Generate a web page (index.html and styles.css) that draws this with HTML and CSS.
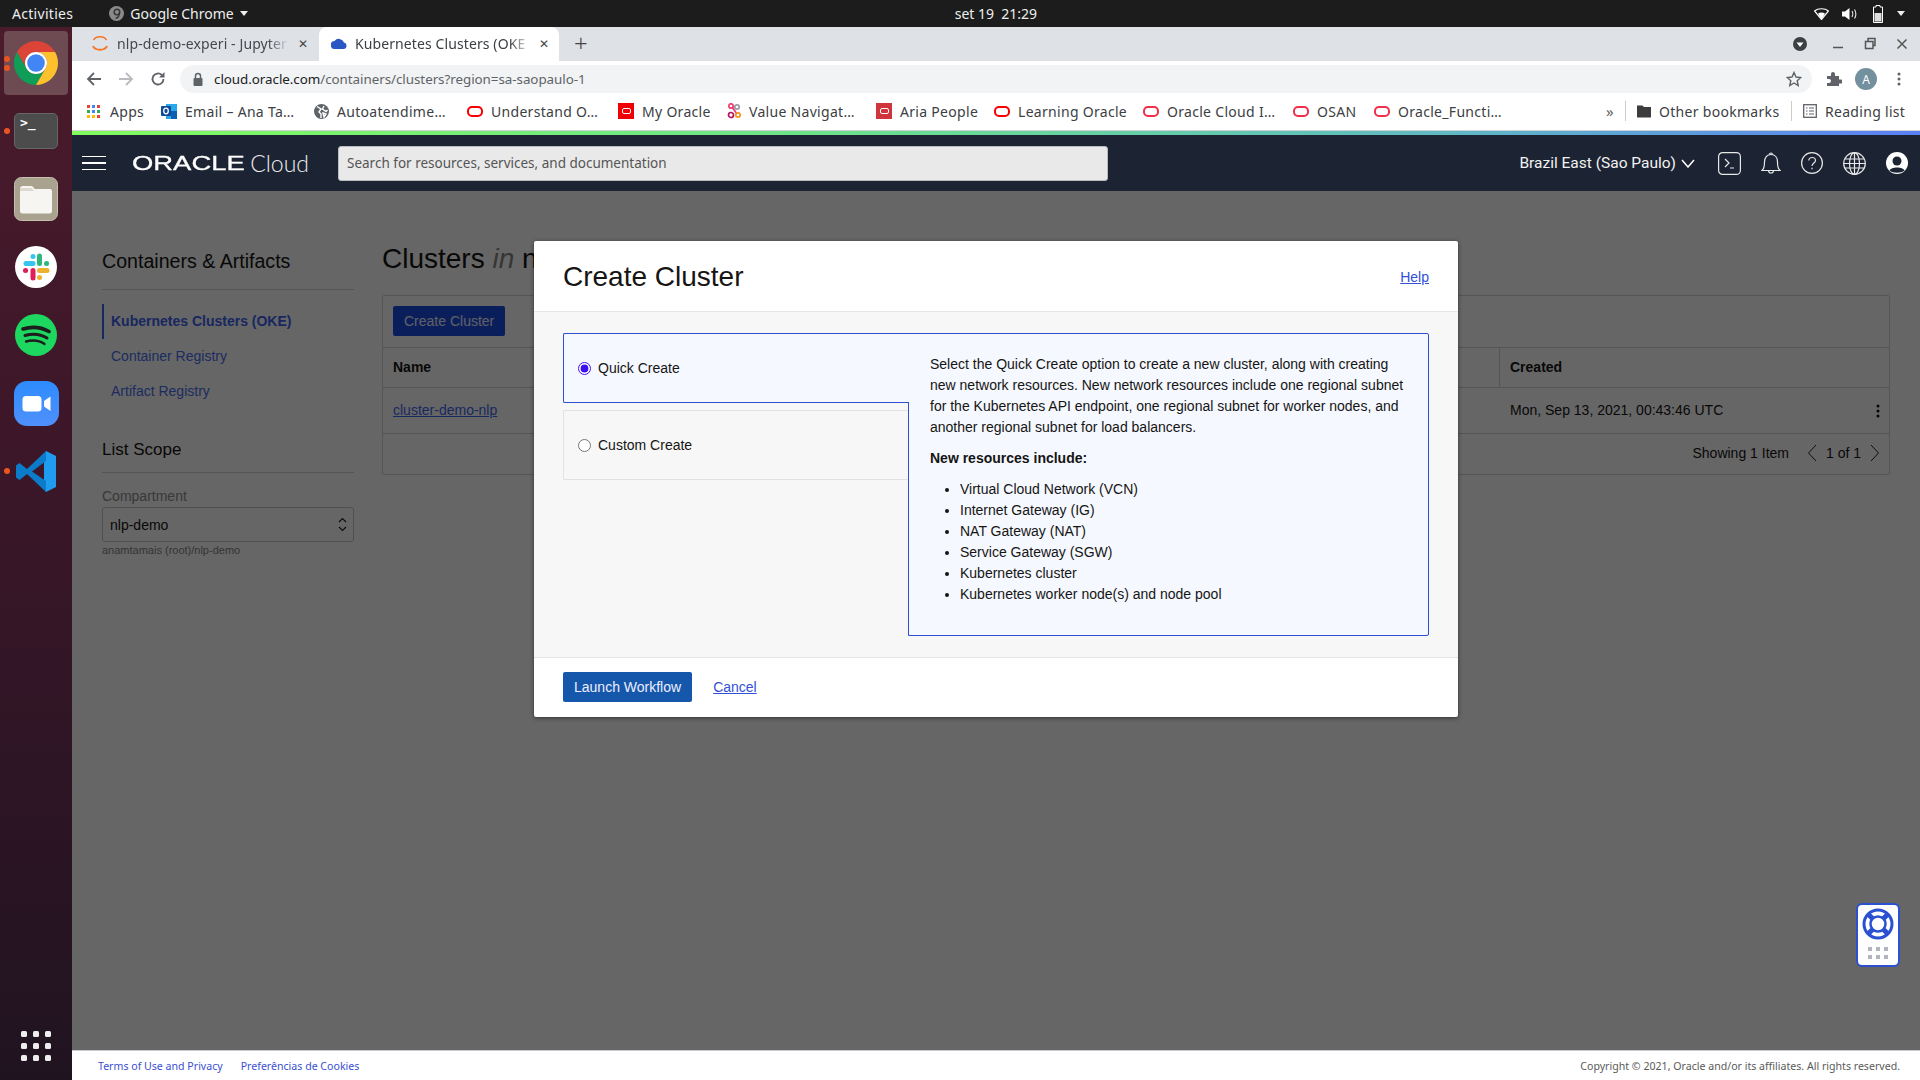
FILE: index.html
```html
<!DOCTYPE html>
<html lang="en">
<head>
<meta charset="utf-8">
<title>Kubernetes Clusters (OKE)</title>
<link rel="stylesheet" href="styles.css">
</head>
<body>
<header class="topbar">
  <span class="activities">Activities</span>
  <span class="appmenu">
    <svg width="15" height="15" viewBox="0 0 16 16"><circle cx="8" cy="8" r="8" fill="#8a8a8a"/><circle cx="8.5" cy="6.5" r="3" fill="none" stroke="#333" stroke-width="1.5"/><path d="M11 7c0 4-2 6-4 6" fill="none" stroke="#333" stroke-width="1.5"/></svg>
    <span>Google Chrome</span>
    <i class="caret"></i>
  </span>
  <span class="clock">set 19&nbsp; 21:29</span>
  <span class="tray">
    <svg width="15" height="12" viewBox="0 0 15 12"><path d="M.5 3C4 0 11 0 14.500 3L7.500 11.500Z" fill="none" stroke="#fff" stroke-width="1.200"/><path d="M4 5.500C6 4 9 4 11 5.500L7.500 11.500Z" fill="#fff"/></svg>
    <svg width="15" height="14" viewBox="0 0 15 14"><path d="M0 4.500H3L7.500 1V13L3 9.500H0Z" fill="#fff"/><path d="M10 4C11 5.500 11 8.500 10 10M12.500 2.500C14.300 5 14.300 9 12.500 11.500" fill="none" stroke="#ddd" stroke-width="1.200"/></svg>
    <svg class="battery" width="10" height="18" viewBox="0 0 10 18"><path d="M3 .5H7V2H9.500V17.500H.5V2H3Z" fill="none" stroke="#fff"/><rect x="1.500" y="8" width="7" height="8.500" fill="#ddd"/></svg>
    <i class="caret tray-caret"></i>
  </span>
</header>

<div class="desktop">
  <nav class="dock">
    <div class="dock-item active">
      <i class="run-dot dot-a"></i><i class="run-dot dot-b"></i>
      <svg width="44" height="44" viewBox="2 2 44 44"><path d="M4.950 13A22 22 0 0 1 43.050 13H24A11 11 0 0 0 14.470 29.500Z" fill="#db4437"/><path d="M24 46A22 22 0 0 1 4.950 13L14.470 29.500A11 11 0 0 0 33.530 29.500Z" fill="#0f9d58"/><path d="M43.050 13A22 22 0 0 1 24 46L33.530 29.500A11 11 0 0 0 24 13Z" fill="#fdc12d"/><circle cx="24" cy="24" r="11" fill="#fff"/><circle cx="24" cy="24" r="8.800" fill="#4285f4"/></svg>
    </div>
    <div class="dock-item">
      <i class="run-dot"></i>
      <div class="term-icon"><span>&gt;_</span></div>
    </div>
    <div class="dock-item">
      <svg width="44" height="44" viewBox="0 0 44 44"><rect x=".5" y=".5" width="43" height="43" rx="7" fill="#a8a28e" stroke="#c4bfae"/><path d="M6 12a3 3 0 0 1 3-3H17a3 3 0 0 1 3 2.500L21 12H36a2 2 0 0 1 2 2V34a2.500 2.500 0 0 1-2.500 2.500H8.500A2.500 2.500 0 0 1 6 34Z" fill="#f6f5f2"/><path d="M6 14H20L17.500 11H6Z" fill="#dcd9d0"/></svg>
    </div>
    <div class="dock-item">
      <svg width="42" height="42" viewBox="0 0 42 42"><circle cx="21" cy="21" r="21" fill="#fff"/><g fill="none" stroke-width="5" stroke-linecap="round"><path d="M11 17.500H18" stroke="#36c5f0"/><path d="M18 10.500V10.600" stroke="#36c5f0"/><path d="M24.500 10V17.500" stroke="#2eb67d"/><path d="M31.500 17.500H31.600" stroke="#2eb67d"/><path d="M24.500 24.500H32" stroke="#ecb22e"/><path d="M24.500 31.500H24.600" stroke="#ecb22e"/><path d="M18 24.500V32" stroke="#e01e5a"/><path d="M10.500 24.500H10.600" stroke="#e01e5a"/></g></svg>
    </div>
    <div class="dock-item">
      <svg width="42" height="42" viewBox="0 0 42 42"><circle cx="21" cy="21" r="21" fill="#1ed760"/><g fill="none" stroke="#1d1d1d" stroke-linecap="round"><path d="M8 15C16 12.500 26 13 34 17.500" stroke-width="3.600"/><path d="M10 21.500C17 19.500 25.500 20 32 24" stroke-width="3"/><path d="M11 27.500C17 26 24.500 26.500 29.500 30" stroke-width="2.400"/></g></svg>
    </div>
    <div class="dock-item">
      <svg width="45" height="45" viewBox="0 0 45 45"><defs><linearGradient id="zg" x1="0" y1="0" x2="0" y2="1"><stop offset="0" stop-color="#2d8cff"/><stop offset="1" stop-color="#4f90fb"/></linearGradient></defs><rect width="45" height="45" rx="13" fill="url(#zg)"/><rect x="8.500" y="15" width="19" height="15.500" rx="3.500" fill="#fff"/><path d="M30 20L36.500 15.500V30L30 25.500Z" fill="#fff"/></svg>
    </div>
    <div class="dock-item">
      <i class="run-dot"></i>
      <svg width="42" height="43" viewBox="0 0 42 43"><path d="M31 1 41 6V37L31 42 29 30V12Z" fill="#1f9cf0"/><path d="M31 1 12 19 4.500 13 1 15.500V27.500L4.500 30 12 24 31 42V31L17 21.500 31 11Z" fill="#0a7cc9"/></svg>
    </div>
    <div class="dock-apps">
      <svg width="30" height="30" viewBox="0 0 30 30" fill="#eee"><rect x="0" y="0" width="6" height="6" rx="1.500"/><rect x="12" y="0" width="6" height="6" rx="1.500"/><rect x="24" y="0" width="6" height="6" rx="1.500"/><rect x="0" y="12" width="6" height="6" rx="1.500"/><rect x="12" y="12" width="6" height="6" rx="1.500"/><rect x="24" y="12" width="6" height="6" rx="1.500"/><rect x="0" y="24" width="6" height="6" rx="1.500"/><rect x="12" y="24" width="6" height="6" rx="1.500"/><rect x="24" y="24" width="6" height="6" rx="1.500"/></svg>
    </div>
  </nav>

  <div class="browser">
    <div class="tabstrip">
      <div class="tab">
        <svg width="16" height="18" viewBox="0 0 16 18"><path d="M1.500 6C3.500 1.500 12.500 1.500 14.500 6" fill="none" stroke="#f37726" stroke-width="1.500"/><path d="M1 12C3 17 13 17 15 12" fill="none" stroke="#f37726" stroke-width="2"/></svg>
        <span class="tab-title">nlp-demo-experi - Jupyter</span>
        <span class="tab-x">✕</span>
      </div>
      <div class="tab tab-active">
        <svg width="16" height="12" viewBox="0 0 16 12"><path d="M4 12a4 4 0 0 1-.5-8A5.500 5.500 0 0 1 13 5.500 3.300 3.300 0 0 1 12.500 12Z" fill="#2b57c4"/></svg>
        <span class="tab-title">Kubernetes Clusters (OKE</span>
        <span class="tab-x">✕</span>
      </div>
      <span class="newtab">+</span>
      <div class="winctl">
        <svg class="profile-dot" width="14" height="14" viewBox="0 0 14 14"><circle cx="7" cy="7" r="7" fill="#3c4043"/><path d="M3.500 5.500H10.500L7 10Z" fill="#fff"/></svg>
        <svg width="14" height="14" viewBox="0 0 14 14"><path d="M2 10.500H12" stroke="#555" stroke-width="1.500"/></svg>
        <svg width="14" height="14" viewBox="0 0 14 14"><path d="M5 1.500H12V8.500H10V11.500H2.500V4.500H5Z M5 4.500H10V8.500" fill="none" stroke="#555" stroke-width="1.500"/></svg>
        <svg width="14" height="14" viewBox="0 0 14 14"><path d="M2.500 2.500 11.500 11.500M11.500 2.500 2.500 11.500" stroke="#555" stroke-width="1.500"/></svg>
      </div>
    </div>

    <div class="toolbar">
      <svg width="16" height="16" viewBox="0 0 16 16"><path d="M15 8H2M8 2 2 8l6 6" fill="none" stroke="#5f6368" stroke-width="1.800"/></svg>
      <svg width="16" height="16" viewBox="0 0 16 16"><path d="M1 8H14M8 2l6 6-6 6" fill="none" stroke="#b8bbbf" stroke-width="1.800"/></svg>
      <svg width="16" height="16" viewBox="0 0 16 16"><path d="M13.500 8A5.500 5.500 0 1 1 11.800 4" fill="none" stroke="#5f6368" stroke-width="1.800"/><path d="M14.500 1V6.500H9Z" fill="#5f6368"/></svg>
      <div class="omnibox">
        <svg width="12" height="14" viewBox="0 0 12 14"><rect x="1.500" y="6" width="9" height="8" rx="1" fill="#5f6368"/><path d="M3.500 6V4a2.500 2.500 0 0 1 5 0V6" fill="none" stroke="#5f6368" stroke-width="1.500"/></svg>
        <span class="url"><b class="url-host">cloud.oracle.com</b>/containers/clusters?region=sa-saopaulo-1</span>
        <svg class="star" width="16" height="16" viewBox="0 0 16 16"><path d="M8 1.500 10 6l4.800.500-3.600 3.200 1 4.800L8 12l-4.200 2.500 1-4.800L1.200 6.500 6 6Z" fill="none" stroke="#5f6368" stroke-width="1.400"/></svg>
      </div>
      <svg class="puzzle" width="16" height="16" viewBox="0 0 16 16"><path d="M1 5H5V3a2 2 0 0 1 4 0V5H13V8.500H15a2 2 0 0 1 0 4H13V15H1V12H3a2 2 0 0 0 0-4H1Z" fill="#5f6368"/></svg>
      <span class="avatar">A</span>
      <svg class="kebab" width="16" height="16" viewBox="0 0 16 16" fill="#5f6368"><circle cx="8" cy="3" r="1.500"/><circle cx="8" cy="8" r="1.500"/><circle cx="8" cy="13" r="1.500"/></svg>
    </div>

    <div class="bookmarks">
      <span class="bm w-apps">
        <svg width="13" height="13" viewBox="0 0 13 13"><rect width="3" height="3" fill="#ea4335"/><rect x="5" width="3" height="3" fill="#4285f4"/><rect x="10" width="3" height="3" fill="#ea4335"/><rect y="5" width="3" height="3" fill="#34a853"/><rect x="5" y="5" width="3" height="3" fill="#4285f4"/><rect x="10" y="5" width="3" height="3" fill="#34a853"/><rect y="10" width="3" height="3" fill="#fbbc05"/><rect x="5" y="10" width="3" height="3" fill="#fbbc05"/><rect x="10" y="10" width="3" height="3" fill="#ea4335"/></svg>
        <span>Apps</span>
      </span>
      <span class="bm w-153">
        <svg width="16" height="16" viewBox="0 0 16 16"><rect x="5" y="1" width="11" height="15" fill="#28a8ea"/><rect x="10" y="8" width="6" height="8" fill="#0a5fb0"/><rect y="3" width="10" height="10" rx="1" fill="#0f4a99"/><ellipse cx="5" cy="8" rx="2.300" ry="2.800" fill="none" stroke="#fff" stroke-width="1.300"/></svg>
        <span>Email – Ana Ta…</span>
      </span>
      <span class="bm w-153">
        <svg width="15" height="15" viewBox="0 0 15 15"><circle cx="7.500" cy="7.500" r="7.500" fill="#5f6368"/><path d="M3 2.500 7 5 5 8l2 2V14M10 2 8.500 5 12 7.500 13.500 6M9 9l3 1-2 3Z" fill="none" stroke="#fff" stroke-width="1.400"/></svg>
        <span>Autoatendime…</span>
      </span>
      <span class="bm w-151"><i class="oracle-oval"></i><span>Understand O…</span></span>
      <span class="bm w-myo"><i class="oracle-box"><i></i></i><span>My Oracle</span></span>
      <span class="bm w-149">
        <svg width="14" height="16" viewBox="0 0 14 16" fill="none" stroke-width="1.700"><path d="M5 4 10 11" stroke="#e0447c"/><circle cx="4" cy="3" r="2.200" stroke="#ef3d6e"/><circle cx="10" cy="4" r="2.200" stroke="#9a9aa5"/><circle cx="4" cy="12" r="2.500" stroke="#b5135f"/><circle cx="11" cy="12" r="2.200" stroke="#f7941d"/></svg>
        <span>Value Navigat…</span>
      </span>
      <span class="bm w-aria"><i class="oracle-box aria"><i></i></i><span>Aria People</span></span>
      <span class="bm w-149"><i class="oracle-oval"></i><span>Learning Oracle</span></span>
      <span class="bm w-150"><i class="oracle-oval soft"></i><span>Oracle Cloud I…</span></span>
      <span class="bm w-osan"><i class="oracle-oval soft"></i><span>OSAN</span></span>
      <span class="bm w-153"><i class="oracle-oval soft"></i><span>Oracle_Functi…</span></span>
      <span class="bm-more">»</span>
      <i class="bm-sep"></i>
      <span class="bm w-other">
        <svg width="14" height="14" viewBox="0 0 14 14"><path d="M0 1.500H5.500L7 3H14V13.500H0Z" fill="#3c3c3c"/></svg>
        <span>Other bookmarks</span>
      </span>
      <i class="bm-sep sep-b"></i>
      <span class="bm w-read">
        <svg width="14" height="14" viewBox="0 0 14 14"><rect x=".7" y=".7" width="12.600" height="12.600" fill="none" stroke="#5f6368" stroke-width="1.300"/><path d="M3 4H4.500M6 4H11M3 7H4.500M6 7H11M3 10H4.500M6 10H11" stroke="#5f6368" stroke-width="1.200"/></svg>
        <span>Reading list</span>
      </span>
    </div>
    <div class="rainbow"></div>

    <div class="oci-header">
      <span class="hamburger"><i></i><i></i><i></i></span>
      <span class="logo"><span class="logo-oracle">ORACLE</span><span class="logo-cloud">Cloud</span></span>
      <div class="search">Search for resources, services, and documentation</div>
      <div class="oci-right">
        <span class="region">Brazil East (Sao Paulo)</span>
        <svg class="chev" width="14" height="9" viewBox="0 0 14 9"><path d="M1 1 7 8l6-7" fill="none" stroke="#fff" stroke-width="1.500"/></svg>
        <svg class="cs-icon" width="23" height="23" viewBox="0 0 23 23" fill="none" stroke="#e8e8e8" stroke-width="1.200"><rect x=".6" y=".6" width="21.800" height="21.800" rx="4"/><path d="M7 7 11 11 7 15M12 16H16"/></svg>
        <svg width="20" height="24" viewBox="0 0 20 24" fill="none" stroke="#e8e8e8" stroke-width="1.200"><path d="M1 19.500C3.500 17.500 3.500 14 3.500 11 3.500 6.500 6 3.500 10 3.500S16.500 6.500 16.500 11C16.500 14 16.500 17.500 19 19.500Z"/><path d="M8.500 3.500a1.500 1.500 0 0 1 3 0M7.500 19.500a2.500 2.500 0 0 0 5 0"/></svg>
        <svg width="22" height="22" viewBox="0 0 22 22" fill="none" stroke="#e8e8e8" stroke-width="1.200"><circle cx="11" cy="11" r="10.400"/><path d="M7.800 8.500C8 4.500 14.500 4.500 14.500 8.500 14.500 11 11 11 11 14M11 15.800V17.300"/></svg>
        <svg width="23" height="23" viewBox="0 0 23 23" fill="none" stroke="#e8e8e8" stroke-width="1.200"><circle cx="11.500" cy="11.500" r="10.800"/><ellipse cx="11.500" cy="11.500" rx="5" ry="10.800"/><path d="M11.500 .7V22.300M1.800 7H21.200M1.800 16H21.200M.7 11.500H22.300"/></svg>
        <svg width="22" height="22" viewBox="0 0 22 22"><circle cx="11" cy="11" r="11" fill="#fff"/><circle cx="11" cy="9" r="4.500" fill="#1c2333"/><path d="M3.500 18.500C5 14.500 17 14.500 18.500 18.500 15 21.500 7 21.500 3.500 18.500Z" fill="#1c2333"/></svg>
      </div>
    </div>

    <main class="content">
      <div class="page">
        <aside class="sidebar">
          <h2 class="side-title first">Containers &amp; Artifacts</h2>
          <ul class="side-nav">
            <li class="current">Kubernetes Clusters (OKE)</li>
            <li>Container Registry</li>
            <li>Artifact Registry</li>
          </ul>
          <h2 class="side-title scope">List Scope</h2>
          <div class="field-label">Compartment</div>
          <div class="select">
            <span>nlp-demo</span>
            <svg width="9" height="15" viewBox="0 0 9 15" fill="none" stroke="#222" stroke-width="1.200"><path d="M1 5 4.500 1.500 8 5M1 10 4.500 13.500 8 10"/></svg>
          </div>
          <div class="field-hint">anamtamais (root)/nlp-demo</div>
        </aside>
        <section class="listing">
          <h1 class="list-title">Clusters <em>in</em> n</h1>
          <div class="panel">
            <div class="panel-tools"><span class="btn-dim">Create Cluster</span></div>
            <div class="row row-head"><span>Name</span><span class="col-created">Created</span></div>
            <div class="row row-body"><a class="cluster-link">cluster-demo-nlp</a><span class="col-created plain">Mon, Sep 13, 2021, 00:43:46 UTC<svg class="row-menu" width="4" height="14" viewBox="0 0 4 14" fill="#111"><circle cx="2" cy="2" r="1.500"/><circle cx="2" cy="7" r="1.500"/><circle cx="2" cy="12" r="1.500"/></svg></span></div>
            <div class="row-foot">
              <span>Showing 1 Item</span>
              <svg width="10" height="18" viewBox="0 0 10 18" fill="none" stroke="#222"><path d="M9 1 1.500 9 9 17"/></svg>
              <span>1 of 1</span>
              <svg width="10" height="18" viewBox="0 0 10 18" fill="none" stroke="#222"><path d="M1 1 8.500 9 1 17"/></svg>
            </div>
          </div>
        </section>
      </div>

      <div class="backdrop">
        <div class="modal">
          <div class="modal-head">
            <h2 class="modal-title">Create Cluster</h2>
            <a class="link">Help</a>
          </div>
          <div class="modal-body">
            <div class="options">
              <label class="option selected"><input type="radio" name="mode" checked><span>Quick Create</span></label>
              <label class="option"><input type="radio" name="mode"><span>Custom Create</span></label>
            </div>
            <div class="details">
              <p>Select the Quick Create option to create a new cluster, along with creating new network resources. New network resources include one regional subnet for the Kubernetes API endpoint, one regional subnet for worker nodes, and another regional subnet for load balancers.</p>
              <p class="strong">New resources include:</p>
              <ul>
                <li>Virtual Cloud Network (VCN)</li>
                <li>Internet Gateway (IG)</li>
                <li>NAT Gateway (NAT)</li>
                <li>Service Gateway (SGW)</li>
                <li>Kubernetes cluster</li>
                <li>Kubernetes worker node(s) and node pool</li>
              </ul>
            </div>
          </div>
          <div class="modal-foot">
            <span class="btn-primary">Launch Workflow</span>
            <a class="link">Cancel</a>
          </div>
        </div>
      </div>

      <div class="help-widget">
        <svg width="32" height="32" viewBox="0 0 32 32"><circle cx="16" cy="16" r="14" fill="#fff" stroke="#2b50d2" stroke-width="3"/><path d="M6.500 6.500 25.500 25.500M25.500 6.500 6.500 25.500" stroke="#2b50d2" stroke-width="5"/><circle cx="16" cy="16" r="7.500" fill="#fff" stroke="#2b50d2" stroke-width="2.500"/></svg>
        <svg width="20" height="13" viewBox="0 0 20 13" fill="#b1b4be"><rect width="4" height="4"/><rect x="8" width="4" height="4"/><rect x="16" width="4" height="4"/><rect y="8" width="4" height="4"/><rect x="8" y="8" width="4" height="4"/><rect x="16" y="8" width="4" height="4"/></svg>
      </div>
    </main>

    <footer class="oci-footer">
      <a>Terms of Use and Privacy</a>
      <a>Preferências de Cookies</a>
      <span class="copyright">Copyright © 2021, Oracle and/or its affiliates. All rights reserved.</span>
    </footer>
  </div>
</div>
</body>
</html>
```
FILE: styles.css
```css
* { box-sizing: border-box; }
html, body { margin: 0; height: 100%; overflow: hidden; }
body { display: flex; flex-direction: column; height: 1080px; font-family: "Noto Sans", sans-serif; background: #1c1c1c; }
i { font-style: normal; display: block; }
svg { flex: none; display: block; }

/* Ubuntu top bar */
.topbar { height: 27px; flex: none; background: #1c1c1c; color: #eee; display: flex; align-items: center; font-size: 14px; position: relative; }
.activities { margin-left: 12px; letter-spacing: .3px; }
.appmenu { display: flex; align-items: center; gap: 6px; margin-left: 36px; }
.caret { width: 0; height: 0; border: 4.500px solid transparent; border-top: 5px solid #eee; border-bottom: 0; }
.clock { margin-left: 707px; font-size: 14px; }
.tray { margin-left: auto; margin-right: 15px; display: flex; align-items: center; gap: 13px; }
.battery { margin-left: 3px; }
.tray-caret { margin-left: 1px; }

.desktop { flex: 1; display: flex; min-height: 0; }

/* Dock */
.dock { width: 72px; flex: none; display: flex; flex-direction: column; padding-top: 2px; background: linear-gradient(#4a1b2b 0%, #3c1729 40%, #201320 100%); }
.dock-item { height: 68px; display: flex; align-items: center; justify-content: center; position: relative; }
.dock-item.active::before { content: ""; position: absolute; left: 4px; right: 4px; top: 2px; bottom: 2px; border-radius: 4px; background: #6e4a52; }
.dock-item > svg, .dock-item > div { position: relative; }
.run-dot { position: absolute; left: 4px; top: 31px; width: 6px; height: 6px; border-radius: 50%; background: #e95420; }
.dot-a { top: 27px; }
.dot-b { top: 36px; }
.term-icon { width: 44px; height: 36px; border-radius: 5px; background: #4c4c4c; border: 1px solid #666; color: #fff; font: 700 13px "DejaVu Sans Mono", monospace; padding: 1px 0 0 5px; }
.dock-apps { margin-top: auto; height: 68px; display: flex; align-items: flex-start; justify-content: center; padding-top: 19px; }

/* Chrome */
.browser { flex: 1; min-width: 0; display: flex; flex-direction: column; background: #fff; }
.tabstrip { height: 34px; flex: none; background: #dee1e6; display: flex; align-items: stretch; font-size: 14px; color: #45484d; }
.tab { width: 247px; display: flex; align-items: center; padding: 0 0 2px 20px; gap: 9px; }
.tab-active { width: 240px; padding-left: 12px; gap: 8px; background: #fff; border-radius: 8px 8px 0 0; color: #3c4043; }
.tab-title { width: 172px; white-space: nowrap; letter-spacing: .1px; -webkit-mask-image: linear-gradient(90deg, #000 88%, transparent); mask-image: linear-gradient(90deg, #000 88%, transparent); }
.tab-active .tab-title { width: 176px; }
.tab-x { font-size: 12px; color: #444; }
.newtab { font-size: 24px; font-weight: 300; margin-left: 15px; line-height: 31px; color: #444; }
.winctl { margin-left: auto; margin-right: 11px; display: flex; align-items: center; gap: 18px; }
.profile-dot { margin-right: 6px; }

.toolbar { height: 33px; flex: none; display: flex; align-items: center; gap: 16px; padding: 3px 13px 0 14px; }
.omnibox { flex: 1; height: 28px; margin-left: -2px; background: #f1f3f4; border-radius: 14px; display: flex; align-items: center; padding: 0 10px 0 12px; gap: 10px; }
.url { font-size: 13.400px; line-height: 26px; padding-bottom: 1px; color: #5f6368; letter-spacing: -.05px; }
.url-host { font-weight: 400; color: #202124; }
.star { margin-left: auto; }
.puzzle { margin-left: -2px; }
.avatar { width: 22px; height: 22px; margin: 0 -2px 0 -3px; border-radius: 50%; background: #73909f; color: #fff; font-size: 12px; display: flex; align-items: center; justify-content: center; }

.bookmarks { height: 37px; flex: none; display: flex; align-items: center; padding: 0 0 2px 15px; border-bottom: 1px solid #d0d2d6; font-size: 14px; letter-spacing: .3px; color: #3c4043; }
.bm { display: flex; align-items: center; gap: 8px; white-space: nowrap; flex: none; }
.w-apps { width: 74px; gap: 10px; }
.w-153 { width: 153px; }
.w-151 { width: 151px; }
.w-150 { width: 150px; }
.w-149 { width: 149px; }
.w-myo { width: 109px; }
.w-aria { width: 118px; }
.w-osan { width: 81px; }
.oracle-oval { width: 16px; height: 11px; border: 2.200px solid #f80000; border-radius: 5px; flex: none; }
.oracle-oval.soft { border-color: #f0304a; }
.oracle-box { width: 16px; height: 16px; background: #f00000; display: flex; align-items: center; justify-content: center; flex: none; }
.oracle-box.aria { background: #d0353c; }
.oracle-box i { width: 9px; height: 6px; border: 1.500px solid #fff; border-radius: 2px; }
.bm-more { margin-left: 79px; font-size: 15px; width: 19px; flex: none; color: #5f6368; }
.bm-sep { width: 1px; height: 20px; background: #ccc; margin-right: 11px; flex: none; }
.sep-b { margin-left: 11px; }
.w-other { width: 143px; }
.w-read { width: 110px; }

.rainbow { height: 4px; flex: none; background: linear-gradient(90deg, #82fb5f 0%, #6de38a 40%, #5fb8c4 75%, #5b7ff5 100%); }

/* OCI header */
.oci-header { height: 56px; flex: none; background: #1c2333; color: #fff; display: flex; align-items: center; padding: 0 12px 0 10px; }
.hamburger { width: 24px; display: flex; flex-direction: column; gap: 5px; flex: none; }
.hamburger i { height: 1.500px; background: #fff; }
.logo { width: 177px; margin-left: 26px; flex: none; display: flex; align-items: center; }
.logo-oracle { width: 123px; font: 400 20px "Liberation Sans", sans-serif; -webkit-text-stroke: .3px #fff; transform: scaleX(1.370); transform-origin: left center; white-space: nowrap; }
.logo-cloud { font: 300 23px Lato, sans-serif; color: #eee; }
.search { width: 770px; height: 35px; margin-left: 29px; flex: none; background: #e9e9e9; border: 1px solid #b9bcc2; border-radius: 3px; color: #555; font-size: 13.500px; line-height: 32px; padding-left: 8px; }
.oci-right { margin-left: auto; display: flex; align-items: center; gap: 20px; }
.region { font: 15.500px Roboto, sans-serif; color: #f2f2f2; margin-right: -15px; }
.chev { margin-right: 3px; }

/* Content */
.content { flex: 1; min-height: 0; position: relative; background: #fff; overflow: hidden; }
.page { display: flex; gap: 28px; padding: 51px 30px 0; font-family: "Liberation Sans", sans-serif; color: #161513; font-size: 14px; }
.sidebar { width: 252px; flex: none; padding-top: 5px; }
.side-title { margin: 0; font-weight: 400; border-bottom: 1px solid #d4d4d4; }
.first { font-size: 19.600px; line-height: 28px; padding-bottom: 14px; }
.scope { font-size: 17px; line-height: 24px; padding-bottom: 10px; margin-top: 29px; }
.side-nav { list-style: none; margin: 14px 0 0; padding: 0; color: #4a6ff0; }
.side-nav li { height: 35px; line-height: 35px; padding-left: 9px; }
.side-nav .current { font-weight: 700; color: #3d62f0; border-left: 2px solid #3d62f0; padding-left: 7px; }
.field-label { margin-top: 14px; line-height: 18px; color: #8e8e8e; }
.select { height: 35px; margin-top: 2px; border: 1px solid #c8c8c8; border-radius: 3px; display: flex; align-items: center; justify-content: space-between; padding: 0 6px 0 7px; }
.field-hint { font-size: 11px; line-height: 14px; margin-top: 1px; color: #858585; }
.listing { flex: 1; min-width: 0; }
.list-title { margin: 0; font-size: 28px; line-height: 34px; font-weight: 400; white-space: nowrap; }
.list-title em { color: #888; }
.panel { margin-top: 19px; border: 1px solid #d4d4d4; border-radius: 2px; }
.panel-tools { height: 51px; padding: 10px; }
.btn-dim { display: inline-block; height: 30px; line-height: 30px; padding: 0 11px; background: #1c4de6; color: #eef; border-radius: 2px; }
.row { display: flex; justify-content: space-between; align-items: stretch; border-top: 1px solid #d4d4d4; padding-left: 10px; }
.row-head { height: 40px; line-height: 39px; font-weight: 700; }
.row-body { height: 46px; line-height: 45px; }
.cluster-link { color: #3f68f0; text-decoration: underline; }
.col-created { width: 390px; padding-left: 10px; border-left: 1px solid #d4d4d4; position: relative; }
.col-created.plain { border-left: 0; padding-left: 11px; }
.row-menu { position: absolute; right: 9px; top: 16px; }
.row-foot { height: 41px; border-top: 1px solid #d4d4d4; display: flex; align-items: center; justify-content: flex-end; gap: 9px; padding: 0 9px 2px 0; font-size: 14px; }
.row-foot span:first-child { margin-right: 9px; }

.backdrop { position: absolute; inset: 0; background: rgba(0,0,0,.6); display: flex; justify-content: center; align-items: flex-start; padding-top: 50px; font-family: "Liberation Sans", sans-serif; }
.modal { width: 924px; background: #fff; border-radius: 2px; box-shadow: 0 1px 4px rgba(0,0,0,.5); color: #161513; font-size: 14px; }
.modal-head { height: 71px; padding: 2px 29px 0; display: flex; justify-content: space-between; align-items: center; border-bottom: 1px solid #e5e5e5; }
.modal-title { margin: 0; font-size: 28px; font-weight: 400; }
.link { color: #3250d8; text-decoration: underline; }
.modal-body { background: #f7f7f7; padding: 21px 29px; display: flex; }
.options { width: 345px; flex: none; display: flex; flex-direction: column; gap: 7px; position: relative; z-index: 1; }
.option { height: 70px; display: flex; align-items: center; gap: 7px; padding-left: 14px; background: #f7f7f7; border: 1px solid #e2e2e2; border-right: 0; border-radius: 2px 0 0 2px; }
.option input { margin: 0; width: 13px; height: 13px; accent-color: #3d10f0; flex: none; }
.option.selected { background: #f5f8ff; border-color: #2d4fd0; margin-right: -1px; }
.details { flex: 1; background: #f5f8ff; border: 1px solid #2d4fd0; border-radius: 0 2px 2px 0; padding: 20px 20px 30px 21px; line-height: 21px; }
.details p { margin: 0 0 10px; }
.details .strong { font-weight: 700; }
.details ul { margin: 0; padding-left: 30px; }
.modal-foot { height: 60px; border-top: 1px solid #e5e5e5; display: flex; align-items: center; gap: 21px; padding: 0 0 2px 29px; }
.btn-primary { height: 30px; line-height: 30px; padding: 0 11px; background: #1557ab; color: #eef; border-radius: 2px; }

.help-widget { position: absolute; left: 1784px; top: 712px; width: 44px; height: 64px; background: #fff; border: 2px solid #2b50d2; border-radius: 6px; display: flex; flex-direction: column; align-items: center; gap: 7px; padding-top: 3px; }

.oci-footer { height: 30px; flex: none; background: #fff; border-top: 1px solid #c8ccd2; display: flex; align-items: center; padding: 0 20px 0 26px; gap: 18px; font-size: 10.600px; }
.oci-footer a { color: #3a50d0; }
.copyright { margin-left: auto; color: #5a5a5a; }
```
